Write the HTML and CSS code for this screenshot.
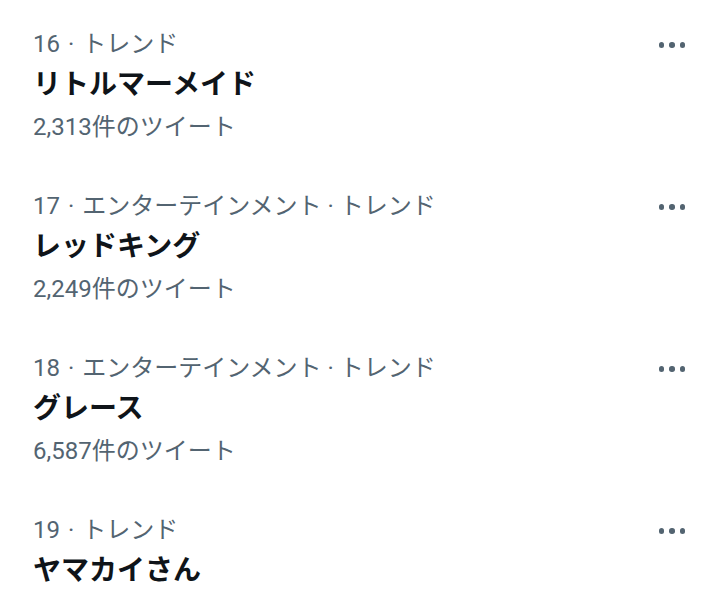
FILE: index.html
```html
<!DOCTYPE html>
<html lang="ja">
<head>
    <meta charset="UTF-8">
    <meta name="viewport" content="width=device-width, initial-scale=1.0">
    <title>トレンド</title>
    <link rel="stylesheet" href="styles.css">
</head>
<body>

<ul class="trends">
    <li class="trend">
        <div class="trend-body">
            <div class="meta">16<span class="sep first">·</span>トレンド</div>
            <div class="title">リトルマーメイド</div>
            <div class="count">2,313件のツイート</div>
        </div>
        <button class="more" aria-label="その他"><span></span><span></span><span></span></button>
    </li>
    <li class="trend">
        <div class="trend-body">
            <div class="meta">17<span class="sep first">·</span>エンターテインメント<span class="sep">·</span>トレンド</div>
            <div class="title">レッドキング</div>
            <div class="count">2,249件のツイート</div>
        </div>
        <button class="more" aria-label="その他"><span></span><span></span><span></span></button>
    </li>
    <li class="trend">
        <div class="trend-body">
            <div class="meta">18<span class="sep first">·</span>エンターテインメント<span class="sep">·</span>トレンド</div>
            <div class="title">グレース</div>
            <div class="count">6,587件のツイート</div>
        </div>
        <button class="more" aria-label="その他"><span></span><span></span><span></span></button>
    </li>
    <li class="trend">
        <div class="trend-body">
            <div class="meta">19<span class="sep first">·</span>トレンド</div>
            <div class="title">ヤマカイさん</div>
        </div>
        <button class="more" aria-label="その他"><span></span><span></span><span></span></button>
    </li>
</ul>

</body>
</html>
```

FILE: styles.css
```css
body {
    margin: 0;
    background-color: #ffffff;
    color: #0f1419;
    font-family: Roboto, "Noto Sans CJK JP", sans-serif;
}
.trends {
    list-style-type: none;
    margin: 0;
    padding: 0;
}
.trend {
    display: flex;
    justify-content: space-between;
    align-items: flex-start;
    padding: 28px 34px 15px 33px;
}
.meta {
    color: #536471;
    font-size: 24px;
    line-height: 32px;
}
.sep {
    margin: 0 6px;
}
.sep.first {
    margin: 0 8px;
}
.title {
    margin-top: 5px;
    font-size: 28px;
    font-weight: 700;
    line-height: 40px;
}
.count {
    margin-top: 2px;
    color: #536471;
    font-size: 24px;
    line-height: 40px;
}
.more {
    display: flex;
    gap: 5px;
    margin-top: 14px;
    padding: 0;
    background: none;
    border: none;
}
.more span {
    width: 5.5px;
    height: 5.5px;
    border-radius: 50%;
    background-color: #536471;
}
```
